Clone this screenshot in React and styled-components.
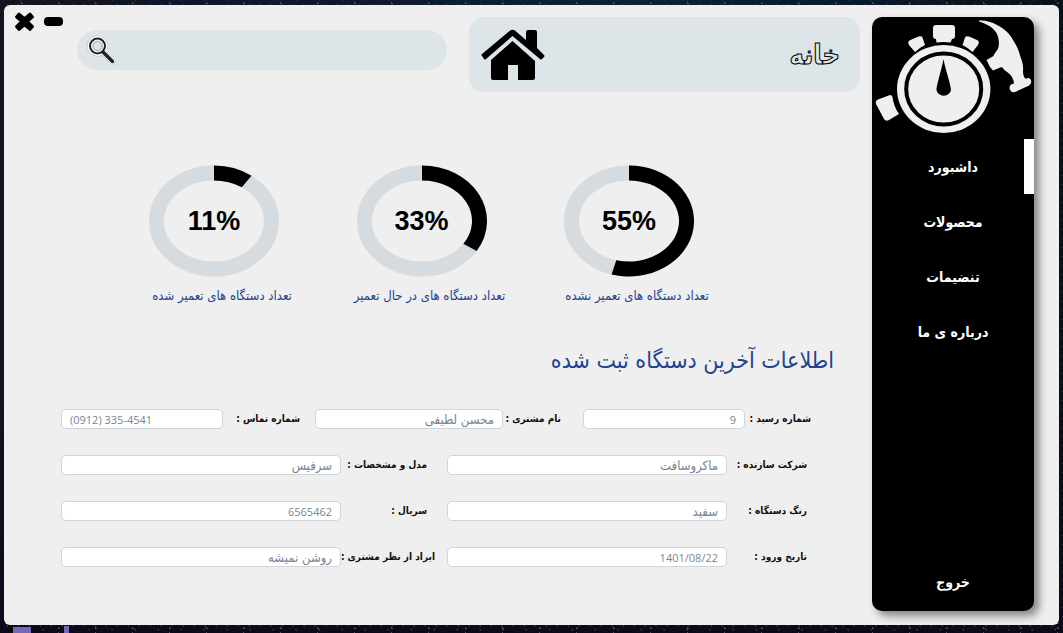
import React from "react";
import styled, { createGlobalStyle } from "styled-components";

const persian = `"DejaVu Sans Condensed", "DejaVu Sans", sans-serif`;

const GlobalStyle = createGlobalStyle`
  *, *::before, *::after { box-sizing: border-box; }
  body { margin: 0; font-family: ${persian}; }
  button, input { font-family: inherit; }
`;

const Desktop = styled.div`
  display: flex;
  min-height: 100vh;
  padding: 5px 4px 8px;
  background:
    linear-gradient(90deg, #7468b8 0 18px, transparent 18px) 13px 100% / 18px 6px no-repeat,
    linear-gradient(90deg, #7468b8 0 5px, transparent 5px) 64px 100% / 5px 7px no-repeat,
    radial-gradient(circle, #4a5260 0 1px, transparent 1px) 3px 1px / 37px 5px,
    radial-gradient(circle, #22344a 0 1px, transparent 1px) 9px 3px / 23px 7px,
    radial-gradient(circle, #2b2a3a 0 1px, transparent 1px) 2px 0 / 11px 9px,
    linear-gradient(180deg, transparent 60%, #0c0a1a 100%),
    linear-gradient(90deg, #15131f 0%, #0c1830 30%, #0b2238 60%, #06121a 100%);
`;

const Window = styled.div`
  display: flex;
  flex: 1;
  gap: 12px;
  padding: 0 25px 14px 10px;
  border-radius: 6px;
  background: #efefef;
`;

const Sidebar = styled.aside`
  display: flex;
  flex: 0 0 162px;
  flex-direction: column;
  margin-top: 12px;
  padding-bottom: 2px;
  border-radius: 10px;
  background: #000;
  box-shadow: 5px 5px 8px rgba(0, 0, 0, 0.45);
`;

const Logo = styled.svg`
  display: block;
  width: 162px;
  height: 122px;
`;

const Nav = styled.nav`
  display: flex;
  flex: 1;
  flex-direction: column;
`;

const NavButton = styled.button`
  height: 55px;
  padding: 0;
  border: 0;
  border-right: 10px solid ${(p) => (p.$active ? "#fff" : "transparent")};
  border-left: 10px solid transparent;
  background: transparent;
  color: #fff;
  font-size: 14px;
  font-weight: 700;
  line-height: 20px;
  cursor: pointer;
`;

const Main = styled.main`
  flex: 1;
  min-width: 0;
`;

const Header = styled.header`
  display: grid;
  grid-template-columns: minmax(0, 391fr) 22px minmax(0, 370fr) 14px 49px;
  align-items: start;
  padding-top: 6px;
`;

const TitleCard = styled.div`
  display: flex;
  grid-column: 1;
  align-items: center;
  justify-content: space-between;
  height: 75px;
  margin-top: 6px;
  padding: 0 20px 0 12px;
  border-radius: 15px;
  background: #dde5e9;
`;

const PageTitle = styled.h1`
  margin: 0;
  color: #dde5e9;
  font-size: 27px;
  font-weight: 700;
  line-height: 32px;
  -webkit-text-stroke: 1px #000;
`;

const SearchBox = styled.label`
  display: flex;
  grid-column: 3;
  align-items: center;
  height: 40px;
  margin-top: 19px;
  padding: 0 10px;
  border-radius: 20px;
  background: #dde5e9;
  direction: ltr;
`;

const SearchInput = styled.input`
  flex: 1;
  min-width: 0;
  height: 30px;
  border: 0;
  outline: 0;
  background: transparent;
  direction: rtl;
  font-size: 14px;
`;

const WindowControls = styled.div`
  display: flex;
  grid-column: 5;
  gap: 9px;
  direction: ltr;
`;

const ControlButton = styled.button`
  display: flex;
  padding: 0;
  border: 0;
  background: transparent;
  cursor: pointer;
`;

const Charts = styled.section`
  display: flex;
  justify-content: space-between;
  padding: 73px 141px 0 110px;
`;

const Chart = styled.figure`
  display: flex;
  flex-direction: column;
  align-items: center;
  width: 180px;
  margin: 0;
`;

const Ring = styled.div`
  display: grid;
  place-items: center;
  & > * { grid-area: 1 / 1; }
`;

const Percent = styled.span`
  direction: ltr;
  color: #000;
  font-family: "Liberation Sans", sans-serif;
  font-size: 27px;
  font-weight: 700;
  line-height: 32px;
`;

const Caption = styled.figcaption`
  padding: 8px 0 0 16px;
  color: #1f4390;
  font-size: 13px;
  line-height: 22px;
  white-space: nowrap;
`;

const SectionTitle = styled.h2`
  margin: 33px 26px 29px 0;
  color: #1f4390;
  font-size: 23px;
  font-weight: 400;
  line-height: 40px;
`;

const Form = styled.form`
  display: flex;
  flex-direction: column;
  gap: 26px;
  padding: 0 49px 0 47px;
`;

const FieldRow = styled.div`
  display: grid;
  align-items: center;
  grid-template-columns: ${(p) =>
    p.$triple
      ? "66px minmax(0, 162fr) 22px 58px minmax(0, 188fr) 15px 77px minmax(0, 162fr)"
      : "80px minmax(0, 1fr) 12px 94px minmax(0, 1fr)"};
  padding-right: ${(p) => (p.$triple ? "0" : "4px")};
`;

const FieldLabel = styled.label`
  grid-column: ${(p) => p.$column};
  padding-right: ${(p) => (p.$indent ? "8px" : "0")};
  color: #111;
  font-size: 10px;
  font-weight: 700;
  line-height: 20px;
  white-space: nowrap;
`;

const FieldInput = styled.input`
  width: 100%;
  height: 20px;
  padding: 0 8px;
  border: 1px solid #ced4da;
  border-radius: 5px;
  background: #fff;
  color: #7b8490;
  direction: ${(p) => (p.$ltr ? "ltr" : "rtl")};
  font-family: ${(p) => (p.$numeric ? `"Open Sans", sans-serif` : persian)};
  font-size: ${(p) => (p.$numeric ? "11px" : "13px")};
  line-height: 18px;
`;

const navItems = ["داشبورد", "محصولات", "تنضیمات", "درباره ی ما"];

const charts = [
  { value: 55, label: "تعداد دستگاه های تعمیر نشده" },
  { value: 33, label: "تعداد دستگاه های در حال تعمیر" },
  { value: 11, label: "تعداد دستگاه های تعمیر شده" },
];

const rows = [
  [
    { id: "receipt", label: "شماره رسید :", value: "9", numeric: true },
    { id: "customer", label: "نام مشتری :", value: "محسن لطیفی" },
    { id: "phone", label: "شماره تماس :", value: "(0912) 335-4541", numeric: true, ltr: true },
  ],
  [
    { id: "maker", label: "شرکت سازنده :", value: "ماکروسافت" },
    { id: "model", label: "مدل و مشخصات :", value: "سرفیس", indent: true },
  ],
  [
    { id: "color", label: "رنگ دستگاه :", value: "سفید" },
    { id: "serial", label: "سریال :", value: "6565462", numeric: true, indent: true },
  ],
  [
    { id: "date", label: "تاریخ ورود :", value: "1401/08/22", numeric: true },
    { id: "issue", label: "ایراد از نظر مشتری :", value: "روشن نمیشه" },
  ],
];

// Point where a ray at the given clockwise angle from the top meets an ellipse.
function edge(angle, rx, ry) {
  const s = Math.sin(angle);
  const c = Math.cos(angle);
  const r = 1 / Math.sqrt((s * s) / (rx * rx) + (c * c) / (ry * ry));
  return `${65 + r * s} ${56 - r * c}`;
}

function Donut({ value }) {
  const angle = (value / 100) * 2 * Math.PI;
  const large = value > 50 ? 1 : 0;
  return (
    <svg width="130" height="112" viewBox="0 0 130 112" aria-hidden="true">
      <ellipse cx="65" cy="56" rx="57.5" ry="48" fill="none" stroke="#d5dbdf" strokeWidth="15" />
      <path
        d={`M65 .5A65 55.5 0 ${large} 1 ${edge(angle, 65, 55.5)}L${edge(angle, 50, 40.5)}A50 40.5 0 ${large} 0 65 15.5Z`}
        fill="#000"
      />
    </svg>
  );
}

function StopwatchLogo() {
  return (
    <Logo viewBox="0 0 162 122" fill="#efefef" role="img" aria-label="لوگو">
      <path d="M64 8h16q3 0 3 3v8q0 3-3 3l-1.500 3.500q-7-1-14 0L64 22q-3 0-3-3v-8q0-3 3-3Z" />
      <path d="M38.500 23l8-3.500q3-1 4 1L53 28q-6 3-10 7l-6-7q-2-4 1.500-5Z" />
      <path d="M105 23l-8-3.500q-3-1-4 1L90.500 28q6 3 10 7l5.500-7q2-4-1-5Z" />
      <ellipse cx="71.700" cy="72" rx="46.700" ry="44" />
      <ellipse cx="71.700" cy="72" rx="37.500" ry="35.500" fill="none" stroke="#000" strokeWidth="4" />
      <path d="M71.500 42C73 51 79 68 79 73a7.300 6.500 0 0 1-14.500 0C64.500 68 70 51 71.500 42Z" fill="#000" />
      <path d="M6 82.500l12-4.500q2 0 2.500 2c1 7 3 12 6.500 17l-10 6q-3 2-5-1L4 87q-1-3 2-4.500Z" />
      <path d="M107 3.500c6-.5 12 1 18 4.500 8 4 13 9 16 15 4 6 6 11 7.500 17 2 5 3 9 2.500 14 0 3 .5 5 2 7.500 2 .5 3-.8 4-.5 2 1 2.500 3 2 5-1 2-2 3-4 3.500L143 75c-3 1-5-1-5.500-4 0-3 2-4 4.500-4.500-.5-4-1.500-6-4-9-3-3-6-4-8-7.500l-3 1-6 2.500-3-3.500-3.500-7 7-4c.5-3 4-5 5-9 1-5 0-10-2-14-3-5-9-9-17.500-11.500Z" />
    </Logo>
  );
}

function HomeIcon() {
  return (
    <svg width="64" height="52" viewBox="0 0 64 52" aria-hidden="true">
      <path d="M31.500 12L54 32v17q0 2-2 2H37V36H27v15H12q-2 0-2-2V31Z" />
      <path d="M28.500 2q3-2.500 6 0L45 11V3q0-2 2-2h7q2 0 2 2v16l7 7q1 1 0 2l-2 2q-1 1-2 0L31.500 7 5 30q-1 1-2 0l-2-3q-1-1 0-2Z" />
    </svg>
  );
}

function SearchIcon() {
  return (
    <svg width="30" height="30" viewBox="0 0 30 30" fill="none" strokeLinecap="round" aria-hidden="true">
      <circle cx="10.500" cy="11" r="8" stroke="#b4bcc0" strokeWidth="5" />
      <path d="M16 17l9.500 9.500" stroke="#b4bcc0" strokeWidth="6" />
      <circle cx="10.500" cy="11" r="8" fill="#dde5e9" stroke="#fff" strokeWidth="4" />
      <path d="M16 17l9.500 9.500" stroke="#fff" strokeWidth="5" />
      <circle cx="10.500" cy="11" r="7.500" stroke="#222" strokeWidth="2" />
      <circle cx="10.500" cy="11" r="4.500" stroke="#a7adb0" strokeWidth="1" />
      <path d="M16 17l9.500 9.500" stroke="#222" strokeWidth="3.500" />
    </svg>
  );
}

export default function App() {
  return (
    <>
      <GlobalStyle />
      <Desktop dir="rtl" lang="fa">
        <Window>
          <Sidebar>
            <StopwatchLogo />
            <Nav>
              {navItems.map((item, i) => (
                <NavButton key={item} type="button" $active={i === 0}>
                  {item}
                </NavButton>
              ))}
            </Nav>
            <NavButton type="button">خروج</NavButton>
          </Sidebar>
          <Main>
            <Header>
              <TitleCard>
                <PageTitle>خانه</PageTitle>
                <HomeIcon />
              </TitleCard>
              <SearchBox>
                <SearchIcon />
                <SearchInput type="search" aria-label="جستجو" />
              </SearchBox>
              <WindowControls>
                <ControlButton type="button" aria-label="بستن">
                  <svg width="21" height="21" viewBox="0 0 21 21" aria-hidden="true">
                    <path
                      d="M5 2.500l5.500 4.500L16 2.500l3 3.500-5 4.500 5 5-3 3.500-5.500-4.500L5 19l-3-3.500 5-5-5-4.500Z"
                      stroke="#000"
                      strokeWidth="2"
                      strokeLinejoin="round"
                    />
                  </svg>
                </ControlButton>
                <ControlButton type="button" aria-label="کوچک کردن">
                  <svg width="19" height="21" viewBox="0 0 19 21" aria-hidden="true">
                    <rect y="6" width="19" height="9" rx="4" />
                  </svg>
                </ControlButton>
              </WindowControls>
            </Header>
            <Charts>
              {charts.map((chart) => (
                <Chart key={chart.value}>
                  <Ring>
                    <Donut value={chart.value} />
                    <Percent>{chart.value}%</Percent>
                  </Ring>
                  <Caption>{chart.label}</Caption>
                </Chart>
              ))}
            </Charts>
            <SectionTitle>اطلاعات آخرین دستگاه ثبت شده</SectionTitle>
            <Form>
              {rows.map((fields) => (
                <FieldRow key={fields[0].id} $triple={fields.length === 3}>
                  {fields.map((field, i) => (
                    <React.Fragment key={field.id}>
                      <FieldLabel htmlFor={field.id} $column={i * 3 + 1} $indent={field.indent}>
                        {field.label}
                      </FieldLabel>
                      <FieldInput
                        id={field.id}
                        defaultValue={field.value}
                        $numeric={field.numeric}
                        $ltr={field.ltr}
                      />
                    </React.Fragment>
                  ))}
                </FieldRow>
              ))}
            </Form>
          </Main>
        </Window>
      </Desktop>
    </>
  );
}
